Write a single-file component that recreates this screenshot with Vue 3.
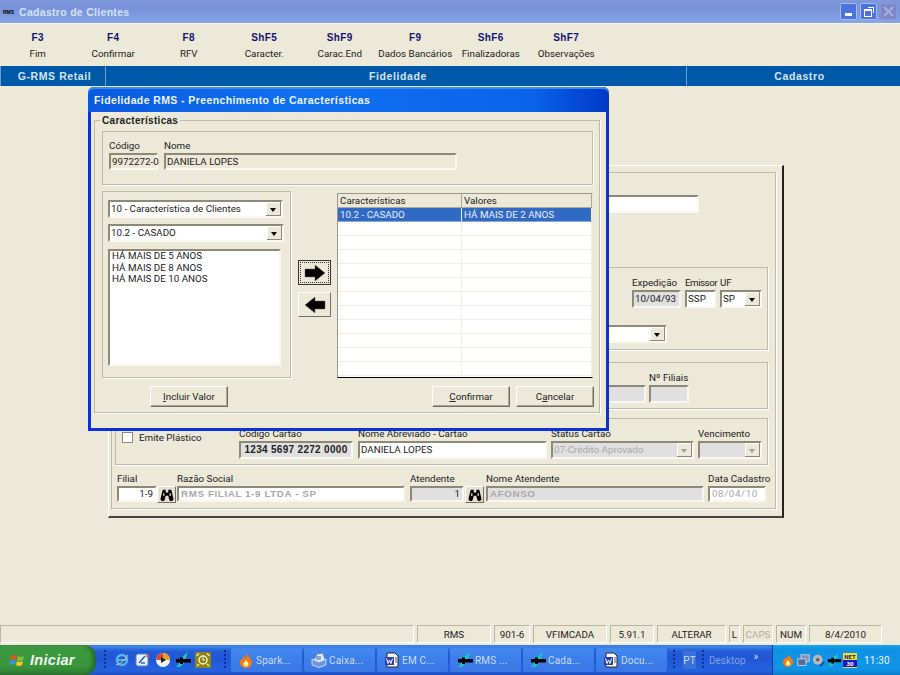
<template>
  <div class="desktop">
    <svg class="defs" width="0" height="0">
      <defs>
        <symbol id="rms" viewBox="0 0 16 16">
          <path d="M1 15 C4 13 5 8 8 4 L13 0 L11 6 C10 10 8 13 5 15 Z" fill="#18c8c0" />
          <rect x="1" y="7" width="15" height="3.500" fill="#000" />
          <rect x="5" y="5.500" width="3" height="6.500" fill="#000" />
        </symbol>
        <symbol id="flame" viewBox="0 0 16 16">
          <path d="M8 1 C9 4 14 6 14 10.500 A6 5.500 0 0 1 2 10.500 C2 7 5 7 6 4 C7 5 7 6 7.500 6.500 C8 5 8.500 3 8 1 Z" fill="#ef7d10" />
          <path d="M8 8 C9 10 10.500 10.500 10.500 12 A2.500 2.500 0 0 1 5.500 12 C5.500 10.500 7 10 8 8 Z" fill="#fff2b0" />
        </symbol>
        <symbol id="doc" viewBox="0 0 16 16">
          <path d="M3 1 H11 L14 4 V15 H3 Z" fill="#fff" stroke="#223" stroke-width="1" />
          <rect x="1" y="5" width="9" height="8" fill="#2a3fa8" />
          <path d="M2.500 6.500 L4 11.500 L5.500 8 L7 11.500 L8.500 6.500" fill="none" stroke="#fff" stroke-width="1" />
          <path d="M11 6 H13 M11 8 H13 M11 10 H13" stroke="#556" stroke-width="1" />
        </symbol>
        <symbol id="mail" viewBox="0 0 16 16">
          <path d="M2 9 L6 2 L12 1 L14 8 L8 13 Z" fill="#dfe9f8" stroke="#5f86c8" stroke-width="1" />
          <path d="M1 7 L8 10 L15 7 V13 L8 15.500 L1 13 Z" fill="#6f98dc" stroke="#dfe9f8" stroke-width="0.800" />
          <path d="M5 5 H10 M5 7 H10" stroke="#3a62b0" stroke-width="1" />
        </symbol>
        <symbol id="binoc" viewBox="0 0 16 14">
          <path d="M3 1 H6.500 V4 H9.500 V1 H13 L15.500 11 A2.500 2.500 0 0 1 10.500 12 L9.500 8 H6.500 L5.500 12 A2.500 2.500 0 0 1 0.500 11 Z" fill="#000" />
          <rect x="3.500" y="5" width="1.500" height="3" fill="#ece9d8" />
          <rect x="11" y="5" width="1.500" height="3" fill="#ece9d8" />
        </symbol>
      </defs>
    </svg>

    <header class="titlebar">
      <span class="titlebar__logo">RMS</span>
      <span class="titlebar__text">Cadastro de Clientes</span>
      <div class="winbtns">
        <span class="winbtn"><i class="winbtn__min"></i></span>
        <span class="winbtn"><i class="winbtn__max"></i></span>
        <span class="winbtn winbtn--off">
          <svg width="11" height="11" viewBox="0 0 11 11"><path d="M1 1 L10 10 M10 1 L1 10" stroke="#a9b0dc" stroke-width="2" /></svg>
        </span>
      </div>
    </header>

    <nav class="toolbar">
      <div v-for="t in tools" :key="t.key" class="tool">
        <b>{{ t.key }}</b>
        <span>{{ t.label }}</span>
      </div>
    </nav>

    <div class="band">
      <span>G-RMS Retail</span>
      <span>Fidelidade</span>
      <span>Cadastro</span>
    </div>

    <main class="main">
      <section class="panel">
        <div class="outer">
          <div class="top-row"><div class="ctl ctl--top"></div></div>

          <div class="group group--a">
            <div class="row row--end">
              <label class="field"><span>Expedição</span><div class="ctl ctl--gray w-49">10/04/93</div></label>
              <label class="field field--tight"><span>Emissor</span><div class="ctl w-31">SSP</div></label>
              <label class="field"><span>UF</span>
                <div class="ctl ctl--select w-42">SP<i class="drop"></i></div>
              </label>
            </div>
            <div class="row row--select">
              <div class="ctl ctl--select"><i class="drop"></i></div>
            </div>
          </div>

          <div class="group group--b">
            <div class="row row--end">
              <div class="ctl ctl--gray ctl--under"></div>
              <label class="field"><span>Nº Filiais</span><div class="ctl ctl--gray w-40"></div></label>
            </div>
          </div>

          <div class="group group--c">
            <div class="check"><i></i><span>Emite Plástico</span></div>
            <label class="field field--card"><span>Código Cartão</span><div class="ctl ctl--gray ctl--card">1234 5697 2272 0000</div></label>
            <label class="field"><span>Nome Abreviado - Cartão</span><div class="ctl w-189">DANIELA LOPES</div></label>
            <label class="field"><span>Status Cartão</span>
              <div class="ctl ctl--select ctl--gray ctl--dim w-143">07-Crédito Aprovado<i class="drop drop--off"></i></div>
            </label>
            <label class="field"><span>Vencimento</span>
              <div class="ctl ctl--select ctl--gray w-64"><i class="drop drop--off"></i></div>
            </label>
          </div>

          <div class="bottom">
            <label class="field"><span>Filial</span><div class="ctl ctl--right w-40">1-9</div></label>
            <button class="find"><svg width="14" height="12"><use href="#binoc" /></svg></button>
            <label class="field ml-1"><span>Razão Social</span><div class="ctl ctl--dim ctl--bold w-228">RMS FILIAL 1-9 LTDA - SP</div></label>
            <label class="field ml-5"><span>Atendente</span><div class="ctl ctl--gray ctl--right w-54">1</div></label>
            <button class="find ml-1"><svg width="14" height="12"><use href="#binoc" /></svg></button>
            <label class="field ml-2"><span>Nome Atendente</span><div class="ctl ctl--gray ctl--dim ctl--bold w-218">AFONSO</div></label>
            <label class="field ml-4"><span>Data Cadastro</span><div class="ctl ctl--dim ctl--spaced w-58">08/04/10</div></label>
          </div>
        </div>
      </section>

      <div class="dialog">
        <div class="dialog__title">Fidelidade RMS - Preenchimento de Características</div>
        <fieldset class="chars">
          <span class="chars__legend">Características</span>
          <div class="box box--head">
            <label class="field"><span>Código</span><div class="ctl ctl--flat w-49">9972272-0</div></label>
            <label class="field"><span>Nome</span><div class="ctl ctl--flat w-293">DANIELA LOPES</div></label>
          </div>
          <div class="chars__body">
            <div class="box box--left">
              <div class="ctl ctl--select w-175">10 - Característica de Clientes<i class="drop"></i></div>
              <div class="ctl ctl--select w-176">10.2 - CASADO<i class="drop"></i></div>
              <ul class="ctl list">
                <li v-for="v in values" :key="v">{{ v }}</li>
              </ul>
            </div>
            <div class="arrows">
              <button class="arrow arrow--focus">
                <svg width="24" height="18" viewBox="0 0 24 18"><path d="M2 5 H12 V1 L22 9 L12 17 V13 H2 Z" fill="#000" stroke="#666" stroke-width="0.5" /></svg>
              </button>
              <button class="arrow">
                <svg width="24" height="18" viewBox="0 0 24 18"><path d="M22 5 H12 V1 L2 9 L12 17 V13 H22 Z" fill="#000" stroke="#666" stroke-width="0.5" /></svg>
              </button>
            </div>
            <div class="grid">
              <div class="grid__head"><span>Características</span><span>Valores</span></div>
              <div class="grid__row grid__row--sel"><span>10.2 - CASADO</span><span>HÁ MAIS DE 2 ANOS</span></div>
              <div v-for="n in 11" :key="n" class="grid__row"><span></span><span></span></div>
            </div>
          </div>
          <div class="chars__actions">
            <button class="btn btn--first"><u>I</u>ncluir Valor</button>
            <button class="btn btn--push"><u>C</u>onfirmar</button>
            <button class="btn">C<u>a</u>ncelar</button>
          </div>
        </fieldset>
      </div>
    </main>

    <footer class="status">
      <span
        v-for="c in statusCells"
        :key="c.text + c.w"
        class="status__cell"
        :class="{ 'status__cell--off': c.off }"
        :style="{ width: c.w + 'px' }"
      >{{ c.text }}</span>
    </footer>

    <div class="taskbar">
      <div class="start">
        <svg width="17" height="17" viewBox="0 0 17 17">
          <path d="M2 4 Q5 2 8 4 L7 8 Q4 6 1 8 Z" fill="#e8501c" />
          <path d="M9 4 Q12 6 15 4 L14 8 Q11 10 8 8 Z" fill="#7fc241" />
          <path d="M1 9 Q4 7 7 9 L6 13 Q3 11 0 13 Z" fill="#3f8fe8" />
          <path d="M8 9 Q11 11 14 9 L13 13 Q10 15 7 13 Z" fill="#fbc81e" />
        </svg>
        <span>Iniciar</span>
      </div>
      <i class="grip"></i>
      <div class="quick">
        <svg width="16" height="16" viewBox="0 0 16 16">
          <circle cx="8" cy="8" r="5" fill="none" stroke="#58b4f0" stroke-width="2.500" />
          <path d="M3 8 H13" stroke="#58b4f0" stroke-width="2" />
          <path d="M2 13 Q8 12 14 3" fill="none" stroke="#e8c860" stroke-width="1" />
        </svg>
        <svg width="16" height="16" viewBox="0 0 16 16">
          <rect x="2" y="2" width="12" height="12" rx="2" fill="#e8f0fc" stroke="#5f86c8" />
          <path d="M5 11 L11 4 M7 11 H11" stroke="#2f62c0" stroke-width="1.500" />
          <circle cx="13.500" cy="4" r="1.500" fill="#e86a20" />
        </svg>
        <svg width="16" height="16" viewBox="0 0 16 16">
          <circle cx="8" cy="8" r="7" fill="#f2f2f2" />
          <path d="M8 1 A7 7 0 0 1 15 8 L8 8 Z" fill="#e8a020" />
          <path d="M1 8 A7 7 0 0 1 8 1 L8 8 Z" fill="#d84a30" />
          <path d="M6 5 L11 8 L6 11 Z" fill="#222" />
        </svg>
        <svg width="16" height="16"><use href="#rms" /></svg>
        <svg width="16" height="16" viewBox="0 0 16 16">
          <rect width="16" height="16" fill="#8c8414" />
          <circle cx="8" cy="8" r="4" fill="none" stroke="#f4f0d0" stroke-width="1.500" />
          <path d="M8 5.500 V8 H10 M1.500 4 L4 1.500 M14.500 4 L12 1.500 M2 14 L4 12 M14 14 L12 12" fill="none" stroke="#f4f0d0" stroke-width="1.200" />
        </svg>
      </div>
      <i class="grip"></i>
      <div class="tasks">
        <div v-for="t in tasks" :key="t.label" class="task">
          <svg width="16" height="16"><use :href="'#' + t.icon" /></svg>
          <span>{{ t.label }}</span>
        </div>
      </div>
      <i class="grip grip--lang"></i>
      <span class="lang">PT</span>
      <i class="grip"></i>
      <span class="desk">Desktop</span>
      <span class="more">»</span>
      <div class="tray">
        <svg width="14" height="14"><use href="#flame" /></svg>
        <svg width="13" height="13" viewBox="0 0 16 16">
          <rect x="5" y="1" width="10" height="8" fill="#8090b8" stroke="#dde" />
          <rect x="1" y="6" width="10" height="8" fill="#5a6a98" stroke="#dde" />
        </svg>
        <svg width="13" height="13" viewBox="0 0 16 16">
          <circle cx="7" cy="7" r="6" fill="#b8b8b8" />
          <circle cx="7" cy="7" r="2" fill="#555" />
          <path d="M10 15 L15 10" stroke="#2a3f90" stroke-width="2" />
        </svg>
        <svg width="14" height="14"><use href="#rms" /></svg>
        <span class="tray__badge"><i>NET</i><b>30</b></span>
        <span class="tray__clock">11:30</span>
      </div>
    </div>
  </div>
</template>

<script setup>
const tools = [
  { key: 'F3', label: 'Fim' },
  { key: 'F4', label: 'Confirmar' },
  { key: 'F8', label: 'RFV' },
  { key: 'ShF5', label: 'Caracter.' },
  { key: 'ShF9', label: 'Carac.End' },
  { key: 'F9', label: 'Dados Bancários' },
  { key: 'ShF6', label: 'Finalizadoras' },
  { key: 'ShF7', label: 'Observações' },
];

const values = ['HÁ MAIS DE 5 ANOS', 'HÁ MAIS DE 8 ANOS', 'HÁ MAIS DE 10 ANOS'];

const statusCells = [
  { text: '', w: 414 },
  { text: 'RMS', w: 74 },
  { text: '901-6', w: 36 },
  { text: 'VFIMCADA', w: 74 },
  { text: '5.91.1', w: 44 },
  { text: 'ALTERAR', w: 69 },
  { text: 'L', w: 11 },
  { text: 'CAPS', w: 30, off: true },
  { text: 'NUM', w: 30 },
  { text: '8/4/2010', w: 73 },
];

const tasks = [
  { label: 'Spark...', icon: 'flame' },
  { label: 'Caixa...', icon: 'mail' },
  { label: 'EM C...', icon: 'doc' },
  { label: 'RMS ...', icon: 'rms' },
  { label: 'Cada...', icon: 'rms' },
  { label: 'Docu...', icon: 'doc' },
];
</script>

<style>
html,
body {
  margin: 0;
  background: #ece9d8;
}
</style>

<style scoped>
.desktop {
  width: 900px;
  height: 675px;
  overflow: hidden;
  display: flex;
  flex-direction: column;
  background: #ece9d8;
  color: #222;
  font-family: Roboto, "Liberation Sans", sans-serif;
  font-size: 9.800px;
}
.defs {
  position: absolute;
}
.titlebar {
  height: 23px;
  flex: none;
  display: flex;
  align-items: center;
  background: linear-gradient(#7f97dc, #7a92da 40%, #7f9fe2 80%, #8aa6e6);
  border-bottom: 1px solid #f6f4ea;
}
.titlebar__logo {
  width: 15px;
  margin-left: 3px;
  position: relative;
  color: #000;
  font-family: "Liberation Sans", sans-serif;
  font-size: 5px;
  font-weight: bold;
}
.titlebar__logo::before {
  content: "";
  position: absolute;
  left: 6px;
  top: -4px;
  width: 2px;
  height: 12px;
  background: #18c8c0;
  transform: rotate(35deg);
  z-index: -1;
}
.titlebar__text {
  margin-left: 1px;
  color: #d6e2f6;
  font-family: "Liberation Sans", sans-serif;
  font-size: 10.500px;
  font-weight: bold;
  letter-spacing: 0.3px;
}
.winbtns {
  margin-left: auto;
  margin-right: 3px;
  display: flex;
  gap: 3px;
}
.winbtn {
  width: 17px;
  height: 17px;
  display: flex;
  align-items: center;
  justify-content: center;
  position: relative;
  border-radius: 2px;
  background: #4a72e0;
  box-shadow: inset 0 0 0 1px #a8bcf0;
}
.winbtn--off {
  background: #7c86c8;
  box-shadow: inset 0 0 0 1px #8c96d4;
}
.winbtn__min {
  width: 7px;
  height: 3px;
  margin-top: 6px;
  background: #fff;
}
.winbtn__max {
  width: 6px;
  height: 5px;
  margin: 3px 2px 0 0;
  border: 1px solid #fff;
  border-top-width: 2px;
  box-shadow: 2px -2px 0 -1px #4a72e0, 3px -3px 0 -1px #fff;
}
.toolbar {
  height: 42px;
  flex: none;
  display: grid;
  grid-template-columns: repeat(8, 75.500px);
  padding-top: 8px;
  box-sizing: border-box;
}
.tool {
  display: flex;
  flex-direction: column;
  align-items: center;
  gap: 4px;
}
.tool b {
  color: #14146e;
  font-family: "Liberation Sans", sans-serif;
  font-size: 10px;
  letter-spacing: 0.4px;
  line-height: 12px;
}
.tool span {
  line-height: 12px;
  white-space: nowrap;
}
.band {
  height: 20px;
  flex: none;
  display: grid;
  grid-template-columns: 106px 581px 213px;
  background: #0058a8;
  color: #d8e4f0;
  font-family: "Liberation Sans", sans-serif;
  font-size: 10.500px;
  font-weight: bold;
  letter-spacing: 0.6px;
  box-shadow: inset 1px 0 0 #6c9cd0;
}
.band span {
  display: flex;
  align-items: center;
  justify-content: center;
  padding-left: 4px;
  border-right: 1px solid #6c9cd0;
}
.band span:last-child {
  border-right: 0;
  padding-left: 12px;
}
.main {
  flex: 1;
  position: relative;
}
.panel {
  margin: 79px 0 0 108px;
  width: 676px;
  height: 353px;
  box-sizing: border-box;
  padding: 6px 0 0 2px;
  border-top: 1px solid #fff;
  border-left: 1px solid #fff;
  border-right: 2px solid #222;
  border-bottom: 2px solid #444;
}
.outer {
  width: 665px;
  height: 337px;
  box-sizing: border-box;
  padding: 22px 7px 0 3px;
  border: 1px solid #bdbaa8;
  box-shadow: 1px 1px 0 #fff;
}
.top-row {
  display: flex;
  justify-content: flex-end;
  padding-right: 69px;
}
.ctl {
  height: 18px;
  box-sizing: border-box;
  padding: 0 2px 0 1px;
  display: flex;
  align-items: center;
  position: relative;
  background: #fff;
  border: 2px solid;
  border-color: #8c8978 #f8f7f0 #f8f7f0 #8c8978;
  white-space: nowrap;
  line-height: 14px;
}
.ctl--top {
  width: 300px;
}
.ctl--gray {
  background: #e0e0e0;
}
.ctl--under {
  width: 40px;
  margin-top: 13px;
}
.ctl--flat {
  background: #ece9d8;
  height: 17px;
}
.ctl--right {
  justify-content: flex-end;
}
.ctl--dim {
  color: #a8a8a8;
}
.ctl--bold {
  font-family: "Liberation Sans", sans-serif;
  font-weight: bold;
  letter-spacing: 0.6px;
  padding-left: 2px;
}
.ctl--spaced {
  letter-spacing: 0.6px;
  padding-left: 2px;
}
.ctl--card {
  width: 114px;
  font-family: "Liberation Sans", sans-serif;
  font-weight: bold;
  font-size: 10px;
  justify-content: center;
  padding: 0;
  letter-spacing: 0.3px;
}
.ctl--select {
  padding-right: 16px;
}
.drop {
  position: absolute;
  right: 0;
  top: 0;
  bottom: 0;
  width: 15px;
  background: #ece9d8;
  box-shadow: inset -1px -1px 0 #8c8978, inset 1px 1px 0 #fff;
}
.drop::after {
  content: "";
  position: absolute;
  left: 4px;
  top: 6px;
  border: 3.500px solid transparent;
  border-top: 4px solid #000;
  border-bottom: 0;
}
.drop--off::after {
  border-top-color: #a0a0a0;
}
.w-31 { width: 31px; }
.w-40 { width: 40px; }
.w-42 { width: 42px; }
.w-49 { width: 49px; }
.w-54 { width: 54px; }
.w-58 { width: 58px; }
.w-64 { width: 64px; }
.w-143 { width: 143px; }
.w-175 { width: 175px; }
.w-176 { width: 176px; }
.w-189 { width: 189px; }
.w-218 { width: 218px; }
.w-228 { width: 228px; }
.w-293 { width: 293px; }
.ml-1 { margin-left: 1px; }
.ml-2 { margin-left: 2px; }
.ml-4 { margin-left: 4px; }
.ml-5 { margin-left: 5px; }
.field {
  display: flex;
  flex-direction: column;
}
.field > span {
  width: 0;
  height: 13px;
  line-height: 11px;
  white-space: nowrap;
}
.field--tight > span {
  letter-spacing: -0.5px;
}
.group {
  box-sizing: border-box;
  width: 653px;
  border: 1px solid #bdbaa8;
  box-shadow: 1px 1px 0 #fff;
}
.group--a {
  height: 83px;
  margin-top: 54px;
  padding: 9px 5px 0 0;
}
.row {
  display: flex;
}
.row--end {
  justify-content: flex-end;
  gap: 4px;
}
.row--select {
  justify-content: flex-end;
  padding-right: 95px;
  margin-top: 17px;
}
.row--select .ctl {
  width: 300px;
}
.group--b {
  height: 47px;
  margin-top: 12px;
  padding: 9px 78px 0 0;
}
.group--b .row--end {
  gap: 3px;
}
.group--c {
  height: 47px;
  margin-top: 9px;
  padding: 9px 5px 0 6px;
  display: flex;
  gap: 4px;
}
.check {
  width: 113px;
  display: flex;
  align-items: flex-start;
  gap: 6px;
  padding-top: 4px;
}
.check i {
  width: 11px;
  height: 11px;
  background: #fff;
  border: 1px solid #8c8978;
  box-sizing: border-box;
}
.check span {
  line-height: 11px;
}
.field--card {
  margin-right: 1px;
}
.bottom {
  display: flex;
  margin: 8px 0 0 2px;
}
.bottom .ctl {
  height: 16px;
}
.find {
  width: 19px;
  height: 17px;
  margin-top: 13px;
  padding: 0;
  display: flex;
  align-items: center;
  justify-content: center;
  background: #e4e1d2;
  border: 1px solid;
  border-color: #fff #716f64 #716f64 #fff;
}
.dialog {
  position: absolute;
  left: 88px;
  top: 1px;
  width: 521px;
  height: 344px;
  box-sizing: border-box;
  background: #ece9d8;
  border: 3px solid #0831d9;
  border-top: 0;
  border-radius: 6px 6px 0 0;
}
.dialog__title {
  height: 25px;
  margin: 0 -3px;
  padding-left: 6px;
  display: flex;
  align-items: center;
  color: #eef4ff;
  font-family: "Liberation Sans", sans-serif;
  font-size: 10.500px;
  font-weight: bold;
  letter-spacing: 0.4px;
  border-radius: 6px 6px 0 0;
  background: linear-gradient(90deg, #0a5ae0, #1070f0 40%, #0a64ea 85%, #0038c8);
  box-shadow: inset 0 2px 0 #3a8cf4;
}
.chars {
  position: relative;
  width: 506px;
  height: 293px;
  margin: 8px 0 0 3px;
  padding: 10px 0 0 7px;
  box-sizing: border-box;
  border: 1px solid #bdbaa8;
  box-shadow: 1px 1px 0 #fff;
}
.chars__legend {
  position: absolute;
  left: 5px;
  top: -7px;
  padding: 0 2px;
  background: #ece9d8;
  font-family: "Liberation Sans", sans-serif;
  font-size: 10px;
  font-weight: bold;
  letter-spacing: 0.3px;
  line-height: 13px;
}
.box {
  box-sizing: border-box;
  border: 1px solid #bdbaa8;
  box-shadow: 1px 1px 0 #fff;
}
.box--head {
  width: 491px;
  height: 54px;
  padding: 8px 0 0 6px;
  display: flex;
  gap: 6px;
}
.chars__body {
  display: flex;
  margin-top: 6px;
}
.box--left {
  width: 189px;
  height: 187px;
  padding: 8px 0 0 5px;
  display: flex;
  flex-direction: column;
  gap: 6px;
}
.list {
  width: 173px;
  height: 117px;
  margin: 1px 0 0;
  padding: 0 2px;
  display: block;
  list-style: none;
}
.list li {
  line-height: 11.500px;
}
.list li:first-child {
  margin-top: -1px;
}
.arrows {
  width: 33px;
  margin: 69px 6px 0 7px;
  display: flex;
  flex-direction: column;
  gap: 7px;
}
.arrow {
  width: 33px;
  height: 25px;
  padding: 0;
  display: flex;
  align-items: center;
  justify-content: center;
  background: #ece9d8;
  border: 1px solid;
  border-color: #fff #716f64 #716f64 #fff;
}
.arrow--focus {
  border: 1px solid #333;
  outline: 1px dotted #333;
  outline-offset: -3px;
}
.grid {
  width: 256px;
  height: 185px;
  margin-top: 2px;
  box-sizing: border-box;
  overflow: hidden;
  background: #fff;
  border: 1px solid;
  border-color: #9a978a #ece9d8 #000 #9a978a;
}
.grid__head,
.grid__row {
  display: grid;
  grid-template-columns: 124px 1fr;
}
.grid__head {
  height: 14px;
  background: #ece9d8;
  box-shadow: inset 0 -1px 0 #aca899;
}
.grid__head span {
  padding-left: 2px;
  line-height: 14px;
  border-right: 1px solid #aca899;
}
.grid__row {
  height: 14px;
  box-sizing: border-box;
  border-bottom: 1px solid #f1efe2;
}
.grid__row span {
  padding-left: 2px;
  line-height: 13px;
  border-right: 1px solid #f1efe2;
}
.grid__row--sel {
  background: #316ac5;
  color: #e8eef8;
  border-bottom-color: #8aa8d8;
}
.grid__row--sel span {
  border-right-color: #e8eef8;
}
.chars__actions {
  display: flex;
  width: 492px;
  margin-top: 8px;
  gap: 6px;
}
.btn {
  width: 78px;
  height: 21px;
  padding: 0;
  background: #ece9d8;
  color: #222;
  font: inherit;
  border: 1px solid;
  border-color: #fff #716f64 #716f64 #fff;
  box-shadow: inset -1px -1px 0 #aca899;
}
.btn--first {
  margin-left: 48px;
}
.btn--push {
  margin-left: auto;
}
.status {
  height: 20px;
  flex: none;
  display: flex;
  gap: 3px;
  padding-bottom: 2px;
  box-sizing: border-box;
}
.status__cell {
  flex: none;
  box-sizing: border-box;
  display: flex;
  align-items: center;
  justify-content: center;
  border: 1px solid;
  border-color: #b8b5a2 #fff #fff #b8b5a2;
}
.status__cell--off {
  color: #b0ae9f;
}
.taskbar {
  height: 30px;
  flex: none;
  display: flex;
  align-items: center;
  color: #cddaf4;
  background: linear-gradient(#3a80e4 0, #3a80e4 8%, #2a6ee0 14%, #235bd6 22%, #2157d6 45%, #2562df 85%, #2158d4 92%, #1d4ec0 100%);
}
.start {
  width: 96px;
  height: 30px;
  flex: none;
  box-sizing: border-box;
  padding-left: 9px;
  display: flex;
  align-items: center;
  gap: 4px;
  border-radius: 0 12px 12px 0;
  background: linear-gradient(#5aa85a, #3b9a3f 12%, #3a953c 70%, #2e7d32);
  box-shadow: inset -3px 0 4px #256428;
}
.start span {
  color: #f2f6ee;
  font-family: "Liberation Sans", sans-serif;
  font-size: 14.500px;
  font-weight: bold;
  font-style: italic;
  letter-spacing: 0.3px;
}
.grip {
  width: 2px;
  height: 20px;
  flex: none;
  margin: 0 5px 0 8px;
  background: repeating-linear-gradient(#0f2f90 0 2px, transparent 2px 4px);
}
.quick {
  width: 110px;
  margin-left: 3px;
  display: flex;
  gap: 4.250px;
}
.quick + .grip {
  margin: 0 5px 0 0;
}
.tasks {
  display: flex;
  gap: 2px;
}
.task {
  width: 71px;
  height: 24px;
  box-sizing: border-box;
  padding-left: 7px;
  display: flex;
  align-items: center;
  gap: 2px;
  border-radius: 2px;
  background: linear-gradient(#4489ef, #3c7eea 50%, #3a78e4);
  font-size: 10px;
  letter-spacing: 0.2px;
}
.grip--lang {
  margin: 0 8px 0 6px;
}
.lang {
  width: 13px;
  height: 18px;
  display: flex;
  align-items: center;
  justify-content: center;
  margin-right: 6px;
  background: #3a70d8;
  font-size: 10px;
}
.lang + .grip {
  margin: 0 5px 0 0;
}
.desk {
  color: #7fa2e4;
  font-size: 10px;
}
.more {
  margin: -8px 0 0 8px;
  font-size: 10px;
}
.tray {
  margin-left: auto;
  width: 128px;
  height: 30px;
  flex: none;
  box-sizing: border-box;
  padding-left: 8px;
  display: flex;
  align-items: center;
  gap: 2px;
  background: linear-gradient(#18a4ea, #0f92e4 15%, #1095e6 80%, #0c7ccc);
  border-left: 1px solid #0a3c9c;
}
.tray__badge {
  width: 14px;
  height: 15px;
  display: flex;
  flex-direction: column;
  font-size: 6px;
  line-height: 7px;
  text-align: center;
  background: #f4e020;
  color: #1a1a90;
}
.tray__badge i {
  font-style: normal;
  font-weight: bold;
}
.tray__badge b {
  background: #1a1ac0;
  color: #fff;
}
.tray__clock {
  margin-left: 5px;
  color: #e8f2fc;
  font-size: 10px;
  letter-spacing: 0.2px;
}
</style>
